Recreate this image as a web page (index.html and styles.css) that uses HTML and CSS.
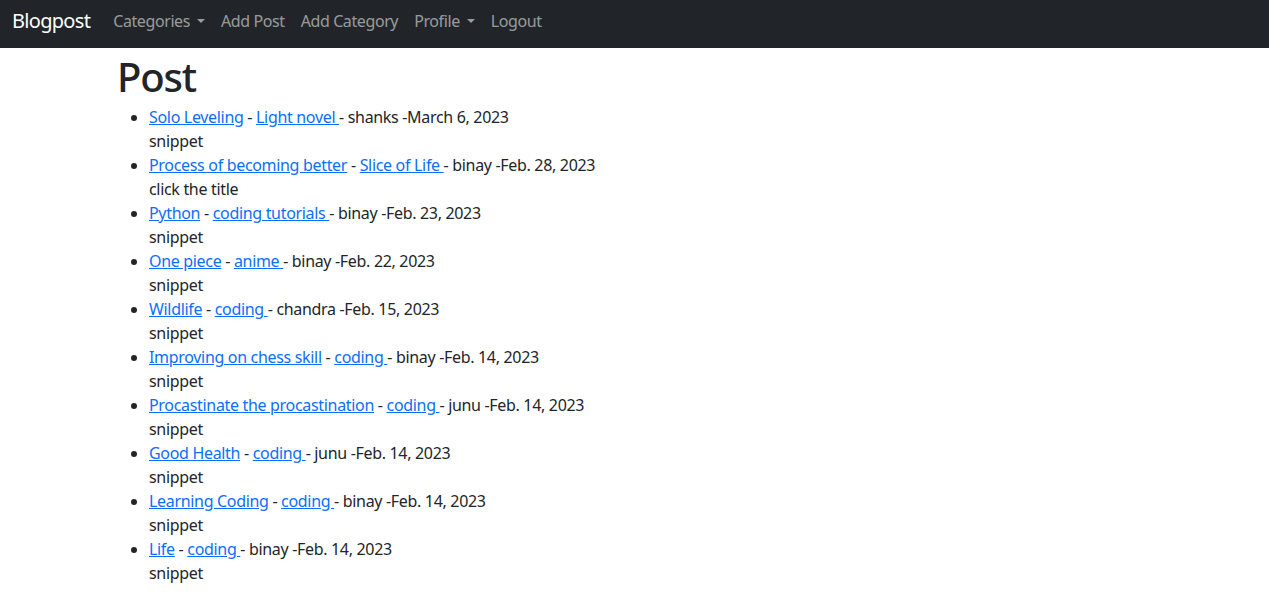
FILE: index.html
```html
<!DOCTYPE html>
<html lang="en">
<head>
<meta charset="utf-8">
<title>Blogpost</title>
<link rel="stylesheet" href="styles.css">
</head>
<body>
<nav class="navbar">
  <a class="brand" href="#">Blogpost</a>
  <ul class="nav">
    <li><a class="nav-link dropdown" href="#">Categories</a></li>
    <li><a class="nav-link" href="#">Add Post</a></li>
    <li><a class="nav-link" href="#">Add Category</a></li>
    <li><a class="nav-link dropdown" href="#">Profile</a></li>
    <li><a class="nav-link" href="#">Logout</a></li>
  </ul>
</nav>
<main class="content">
  <h1 class="title">Post</h1>
  <ul class="posts">
    <li><a href="#">Solo Leveling</a> - <a href="#">Light novel </a>- shanks -March 6, 2023<br>snippet</li>
    <li><a href="#">Process of becoming better</a> - <a href="#">Slice of Life </a>- binay -Feb. 28, 2023<br>click the title</li>
    <li><a href="#">Python</a> - <a href="#">coding tutorials </a>- binay -Feb. 23, 2023<br>snippet</li>
    <li><a href="#">One piece</a> - <a href="#">anime </a>- binay -Feb. 22, 2023<br>snippet</li>
    <li><a href="#">Wildlife</a> - <a href="#">coding </a>- chandra -Feb. 15, 2023<br>snippet</li>
    <li><a href="#">Improving on chess skill</a> - <a href="#">coding </a>- binay -Feb. 14, 2023<br>snippet</li>
    <li><a href="#">Procastinate the procastination</a> - <a href="#">coding </a>- junu -Feb. 14, 2023<br>snippet</li>
    <li><a href="#">Good Health</a> - <a href="#">coding </a>- junu -Feb. 14, 2023<br>snippet</li>
    <li><a href="#">Learning Coding</a> - <a href="#">coding </a>- binay -Feb. 14, 2023<br>snippet</li>
    <li><a href="#">Life</a> - <a href="#">coding </a>- binay -Feb. 14, 2023<br>snippet</li>
  </ul>
</main>
</body>
</html>
```

FILE: styles.css
```css
* { box-sizing: border-box; }
html, body { margin: 0; padding: 0; }
body {
  font-family: "Noto Sans", "Open Sans", sans-serif;
  font-size: 16px;
  line-height: 1.5;
  letter-spacing: -0.32px;
  color: #212529;
  background: #fff;
}
.navbar {
  height: 48px;
  background: #212529;
  display: flex;
  align-items: center;
  padding: 0 12px 6px;
}
.brand {
  color: #fff;
  font-size: 20px;
  letter-spacing: -0.7px;
  text-decoration: none;
  margin-right: 15px;
}
.nav {
  list-style: none;
  display: flex;
  margin: 0;
  padding: 0;
}
.nav-link {
  display: block;
  padding: 8px;
  color: rgba(255,255,255,.55);
  letter-spacing: -0.4px;
  text-decoration: none;
}
.dropdown::after {
  content: "";
  display: inline-block;
  margin-left: 7px;
  vertical-align: .255em;
  border-top: .3em solid;
  border-right: .3em solid transparent;
  border-left: .3em solid transparent;
}
.content {
  padding-left: 117px;
  padding-top: 1px;
}
.title {
  margin: 0 0 4px;
  padding-top: 4px;
  font-size: 40px;
  font-weight: 500;
  letter-spacing: -1.2px;
  line-height: 1.2;
}
.posts {
  margin: 0;
  padding-left: 32px;
}
.posts a { color: #0d6efd; }
```
